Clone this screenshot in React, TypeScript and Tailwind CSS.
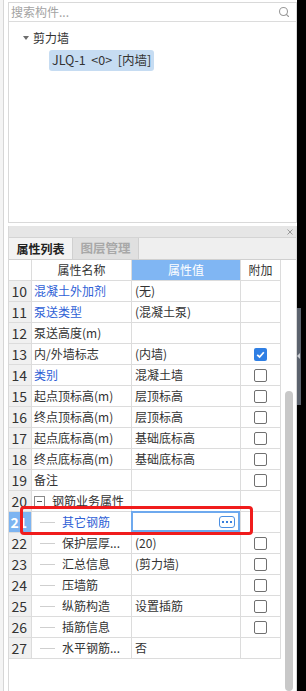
import { Search } from "lucide-react";

type Row = {
  n: number;
  name: string;
  value?: string;
  blue?: boolean;
  cb?: "on" | "off";
  kind?: "group" | "child";
  selected?: boolean;
};

const ROWS: Row[] = [
  { n: 10, name: "混凝土外加剂", value: "(无)", blue: true },
  { n: 11, name: "泵送类型", value: "(混凝土泵)", blue: true },
  { n: 12, name: "泵送高度(m)" },
  { n: 13, name: "内/外墙标志", value: "(内墙)", cb: "on" },
  { n: 14, name: "类别", value: "混凝土墙", blue: true, cb: "off" },
  { n: 15, name: "起点顶标高(m)", value: "层顶标高", cb: "off" },
  { n: 16, name: "终点顶标高(m)", value: "层顶标高", cb: "off" },
  { n: 17, name: "起点底标高(m)", value: "基础底标高", cb: "off" },
  { n: 18, name: "终点底标高(m)", value: "基础底标高", cb: "off" },
  { n: 19, name: "备注", cb: "off" },
  { n: 20, name: "钢筋业务属性", kind: "group" },
  { n: 21, name: "其它钢筋", kind: "child", blue: true, selected: true },
  { n: 22, name: "保护层厚...", value: "(20)", kind: "child", cb: "off" },
  { n: 23, name: "汇总信息", value: "(剪力墙)", kind: "child", cb: "off" },
  { n: 24, name: "压墙筋", kind: "child", cb: "off" },
  { n: 25, name: "纵筋构造", value: "设置插筋", kind: "child", cb: "off" },
  { n: 26, name: "插筋信息", kind: "child", cb: "off" },
  { n: 27, name: "水平钢筋...", value: "否", kind: "child" },
];

function CheckBox({ on }: { on: boolean }) {
  return on ? (
    <div className="flex h-[13px] w-[13px] items-center justify-center rounded-[2px] bg-[#2f7fe4]">
      <svg width="11" height="11" viewBox="0 0 11 11">
        <polyline points="2.2,5.8 4.6,8 8.8,3.2" fill="none" stroke="#fff" strokeWidth="1.7" />
      </svg>
    </div>
  ) : (
    <div className="h-[13px] w-[13px] rounded-[2px] border border-[#707070] bg-white" />
  );
}

function TableRow({ row }: { row: Row }) {
  const nameColor = row.blue ? "text-[#2f5fd6]" : "text-[#333]";
  return (
    <div className="relative flex h-[21px] border-b border-[#dcdcdc]">
      <div
        className={
          row.selected
            ? "flex w-[23px] items-center justify-end border-r border-[#dcdcdc] bg-[#7db4f1] pr-[4px] text-[14px] font-bold text-white"
            : "flex w-[23px] items-center justify-end border-r border-[#dcdcdc] bg-[#f0f0f0] pr-[4px] text-[14px] text-[#333]"
        }
      >
        {row.n}
      </div>
      <div className={`flex w-[100px] items-center border-r border-[#dcdcdc] pl-[2px] text-[12px] ${nameColor}`}>
        {row.kind === "group" && (
          <>
            <div className="flex h-[11px] w-[11px] items-center justify-center border border-[#8a8a8a]">
              <div className="h-[1px] w-[5px] bg-[#555]" />
            </div>
            <span className="ml-[7px] whitespace-nowrap">{row.name}</span>
          </>
        )}
        {row.kind === "child" && (
          <>
            <div className="ml-[6px] h-[1px] w-[15px] bg-[#cfcfcf]" />
            <span className="ml-[7px] whitespace-nowrap">{row.name}</span>
          </>
        )}
        {!row.kind && <span className="whitespace-nowrap">{row.name}</span>}
      </div>
      <div className="relative flex w-[109px] items-center border-r border-[#dcdcdc] pl-[3px] text-[12px] text-[#333]">
        <span className="whitespace-nowrap">{row.value}</span>
        {row.selected && (
          <div className="absolute -left-[1px] -top-[1px] bottom-0 right-0 flex items-center justify-end border-2 border-[#6ea9ee] bg-white pr-[3px]">
            <div className="flex h-[12px] w-[16px] items-center justify-center gap-[2px] rounded-[3px] border-[1.5px] border-[#4b8fe3]">
              <div className="h-[2px] w-[2px] bg-[#3a7fdc]" />
              <div className="h-[2px] w-[2px] bg-[#3a7fdc]" />
              <div className="h-[2px] w-[2px] bg-[#3a7fdc]" />
            </div>
          </div>
        )}
      </div>
      <div className="flex w-[40px] items-center justify-center border-r border-[#dcdcdc]">
        {row.cb && <CheckBox on={row.cb === "on"} />}
      </div>
      {row.selected && (
        <div className="pointer-events-none absolute -top-[6px] left-[11px] z-10 h-[29px] w-[233px] rounded-[4px] border-[3px] border-[#f01c1c]" />
      )}
    </div>
  );
}

export default function App() {
  return (
    <div className="flex h-[691px] w-[306px] overflow-hidden bg-white font-['Noto_Sans_CJK_SC','Microsoft_YaHei',sans-serif] leading-none">
      {/* left frame strip */}
      <div className="w-[4px] border-r border-[#d6d6d6] bg-[#f4f4f4]" />
      <div className="w-[4px] bg-white" />

      {/* panels */}
      <div className="flex w-[289px] flex-col">
        <div className="h-[2px]" />

        {/* component tree */}
        <div className="flex h-[254px] flex-col border border-[#d9d9d9]">
          <div className="flex h-[19px] items-center justify-between border-b border-[#dcdcdc] pl-[2px] pr-[6px]">
            <span className="text-[12px] text-[#a3a3a3]">搜索构件...</span>
            <Search size={12} color="#9a9a9a" strokeWidth={2.2} />
          </div>
          <div className="flex flex-col pt-[7px]">
            <div className="flex h-[18px] items-center pl-[14px]">
              <div className="h-0 w-0 border-l-[3px] border-r-[3px] border-t-[4px] border-l-transparent border-r-transparent border-t-[#6d6d6d]" />
              <span className="ml-[4px] text-[12px] text-[#333]">剪力墙</span>
            </div>
            <div className="mt-[3px] flex pl-[40px]">
              <div className="flex h-[21px] items-center whitespace-pre rounded-[3px] bg-[#c6dcf2] px-[3px] text-[12.5px] text-[#333]">
                JLQ-1  &lt;0&gt;  [内墙]
              </div>
            </div>
          </div>
        </div>

        <div className="h-[4px]" />

        {/* property panel */}
        <div className="flex flex-1 flex-col border-x border-[#d9d9d9]">
          <div className="flex h-[12px] items-center justify-end border-b border-[#d4d4d4] bg-[#e6e6e6] pr-[3px]">
            <svg width="6" height="6" viewBox="0 0 6 6">
              <path d="M0.5 0.5 L5.5 5.5 M5.5 0.5 L0.5 5.5" stroke="#9a9a9a" strokeWidth="1" />
            </svg>
          </div>
          <div className="flex h-[22px] border-b border-[#d0d0d0] bg-[#efefef]">
            <div className="flex w-[64px] items-center justify-center border-r border-[#d0d0d0] bg-[#f3f3f3] text-[12px] font-bold text-[#222]">
              属性列表
            </div>
            <div className="flex w-[66px] items-center justify-center border-r border-[#d0d0d0] bg-[#e0e0e0] text-[12.5px] font-bold text-[#a8a8a8]">
              图层管理
            </div>
          </div>

          <div className="flex flex-1 overflow-hidden">
            <div className="flex w-[272px] flex-col">
              <div className="flex h-[21px] border-b border-[#dcdcdc] text-[12px]">
                <div className="w-[23px] border-r border-[#dcdcdc]" />
                <div className="flex w-[100px] items-center justify-center border-r border-[#dcdcdc] text-[#333]">
                  属性名称
                </div>
                <div className="flex w-[109px] items-center justify-center border-r border-[#dcdcdc] bg-[#80b6f3] text-white">
                  属性值
                </div>
                <div className="flex w-[40px] items-center justify-center border-r border-[#dcdcdc] text-[#333]">
                  附加
                </div>
              </div>
              {ROWS.map((r) => (
                <TableRow key={r.n} row={r} />
              ))}
            </div>
            {/* scrollbar */}
            <div className="flex w-[15px] flex-col pl-[4px] pt-[131px]">
              <div className="h-[300px] w-[8px] rounded-full bg-[#c8c8c8]" />
            </div>
          </div>
        </div>
      </div>

      {/* right dark edge */}
      <div className="flex w-[9px] flex-col bg-black pt-[308px]">
        <div className="flex h-[97px] w-[4px] flex-col bg-[#5b626d] pt-[45px]">
          <div className="h-0 w-0 border-b-[3px] border-r-[3px] border-t-[3px] border-b-transparent border-r-[#c9ccd1] border-t-transparent" />
        </div>
      </div>
    </div>
  );
}
